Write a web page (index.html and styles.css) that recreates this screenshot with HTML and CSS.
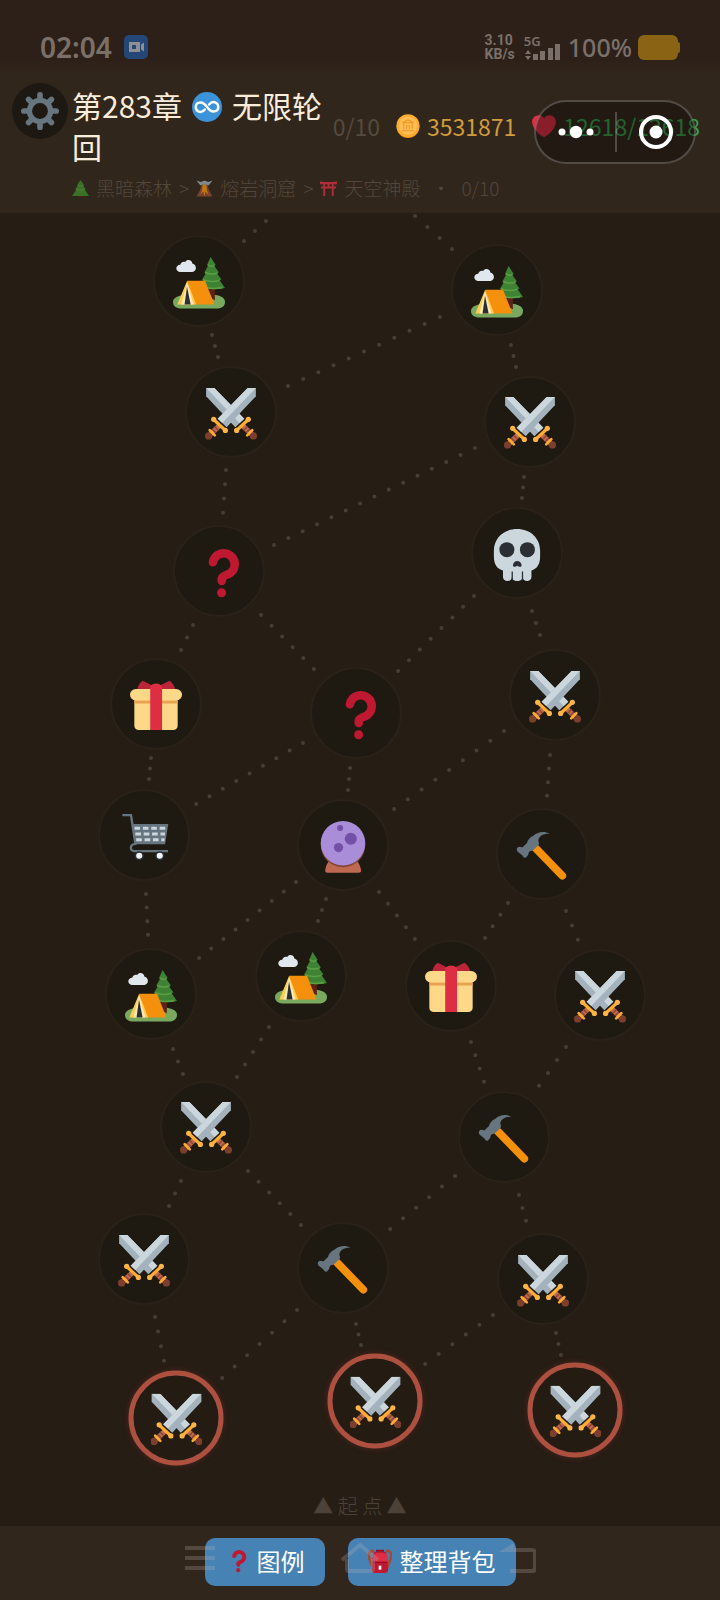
FILE: index.html
```html
<!DOCTYPE html>
<html lang="zh-CN">
<head>
    <meta charset="UTF-8">
    <meta name="viewport" content="width=device-width, initial-scale=1.0">
    <title>第283章 无限轮回</title>
    <link rel="stylesheet" href="styles.css">
</head>
<body>
    <!-- Icon set -->
    <svg class="icon-set" aria-hidden="true">
        <symbol id="sword" viewBox="0 0 36 36">
            <path fill="#a3b2bd" d="M29.5 0h5.7v5.700L15 27.200 8.800 21.300z"/>
            <path fill="#ccd6dd" d="M29.500 0h5.700L12 24.200 8.800 21.300z"/>
            <path stroke="#bf6952" stroke-width="3.600" d="M10 26L3.500 32.300"/>
            <path stroke="#8a4633" stroke-width="1" d="M6.600 26.600l2.600 2.600M5 28.400l2.600 2.600"/>
            <circle cx="2.500" cy="33.200" r="2.500" fill="#7c3f2d"/>
            <path stroke="#ffac33" stroke-width="1.800" stroke-linecap="round" d="M3.200 29.200l3.600 3.600"/>
            <path stroke="#ffac33" stroke-width="2.200" d="M6 21.800l8.200 7.600"/>
            <circle cx="6" cy="21.700" r="1.800" fill="#ffb545"/>
            <circle cx="14.100" cy="29.400" r="1.800" fill="#ffb545"/>
        </symbol>
        <symbol id="battle" viewBox="0 0 36 36">
            <g transform="translate(36 0) scale(-1 1)"><use href="#sword" width="36" height="36"/></g>
            <use href="#sword" width="36" height="36"/>
        </symbol>
        <symbol id="camp" viewBox="0 0 36 36">
            <path fill="#78a95f" d="M0 31c0-2.800 4-4.600 10-5h18c5 .6 8 2.400 8 5 0 3-2 4.700-6 4.700H6C2 35.700 0 34 0 31z"/>
            <path fill="#5c2314" d="M25 21h4v9l-4-2z"/>
            <path fill="#3e8233" d="M26 0l3.600 5.500-1.200.3 3.400 5-1.400.4 3.200 4.400-1.300.5L36 21.500c-6 1.500-12 .8-17.600-.500l2.700-4.900-1-.4 2.600-4.500-1-.4 2.700-5-.8-.3z"/>
            <path fill="none" stroke="#5a9f45" stroke-width="1.100" d="M24 5.500q2.200 1.600 4.800.4M22.200 10.700q4 2 8.600.3M20.600 15.800q6 2.200 11.500.3M19.500 20.800q7.500 1.700 14.500.4"/>
            <path fill="#e1e8ed" d="M4.800 10.300C1.400 10 1.500 5.600 5 5.400 5.500 3.300 7.400 3 8.500 3.500 9.700 1.300 13.200 1.800 13.400 4.500c3.400 1 3.200 5.500 0 5.800z"/>
            <path fill="#f4900c" d="M9.800 16.500h12.400l6.500 16.300H15z"/>
            <path fill="#ffcc4d" d="M9.800 16.500L3 32.800h13z"/>
            <path fill="#ffe8b6" d="M9.800 17.500L5.800 32.800h8.400z"/>
            <path fill="#292f33" d="M9.700 20.500L8 32.800h4.200z"/>
        </symbol>
        <symbol id="event" viewBox="0 0 36 36">
            <path fill="none" stroke="#be1931" stroke-width="5.900" stroke-linecap="round" d="M13.800 10.600a7.600 7.600 0 1 1 10.600 8.300q-4.500 1.500-4.500 3v1.700"/>
            <circle cx="19.800" cy="31.700" r="3.100" fill="#be1931"/>
        </symbol>
        <symbol id="elite" viewBox="0 0 36 36">
            <path fill="#ccd6dd" d="M18 0C27.500 0 34 6.500 34 15v4c0 6-2.500 8.500-6 9.800v4.400c0 3.700-6.100 3.700-6.100 0 0 3.700-7.400 3.700-7.400 0 0 3.700-6.200 3.700-6.200 0v-4.400C4.500 27.500 2 25 2 19v-4C2 6.500 8.500 0 18 0z"/>
            <path stroke="#292f33" stroke-width=".9" d="M14.700 29.500v6M21.800 29.500v6"/>
            <circle cx="11" cy="14.300" r="5.200" fill="#292f33"/>
            <circle cx="25.200" cy="14.300" r="5.200" fill="#292f33"/>
            <path fill="#292f33" d="M15.200 25.300c0-4.200 6-4.200 6 0 0 1-1.800 1.200-3 .1-1.200 1.100-3 .9-3-.1z"/>
        </symbol>
        <symbol id="treasure" viewBox="0 0 36 36">
            <path fill="#bc2439" d="M4.800 7C5.500 4 7 1.500 8.800.6L15 3.700h6L27.400.6C29.400 2 31 4.500 31.400 7z"/>
            <rect x="3" y="12" width="30" height="22.600" rx="3" fill="#fdd888"/>
            <path fill="#e8a24e" d="M3 14h30v2.200H3z"/>
            <rect y="6.200" width="36" height="8" rx="4" fill="#fdd888"/>
            <path fill="#dd2e44" d="M14 4.200q4-3.400 8.200 0v30.400H14z"/>
        </symbol>
        <symbol id="shop" viewBox="0 0 36 36">
            <path fill="none" stroke="#66757f" stroke-width="1.600" d="M3 2.800h6l3 20c-4 .3-4 4.900-.8 5h23.400"/>
            <path fill="#66757f" d="M10.300 9h24.500l-2.200 14H12z"/>
            <g stroke="#ccd6dd" stroke-width="2.100" stroke-dasharray="3.900 1.900">
                <path d="M11.400 11.900h21.500"/><path d="M12 15.900h20.500"/><path d="M12.600 19.900h19.600"/>
            </g>
            <circle cx="14.700" cy="31" r="3.200" fill="#292f33"/>
            <circle cx="28.900" cy="31" r="3.200" fill="#292f33"/>
            <circle cx="14.700" cy="31" r="2.100" fill="#f5f8fa"/>
            <circle cx="28.900" cy="31" r="2.100" fill="#f5f8fa"/>
        </symbol>
        <symbol id="oracle" viewBox="0 0 36 36">
            <path fill="#bf6952" d="M8.500 27h19c2 3 2.500 4.500 3 7 .2 1.200-.5 1.900-1.500 1.900H7.200c-1 0-1.700-.7-1.500-1.900.4-2.500 1-4 2.800-7z"/>
            <circle cx="18" cy="16.600" r="15.400" fill="#854836"/>
            <circle cx="18" cy="15.400" r="15.400" fill="#aa8dd8"/>
            <circle cx="16" cy="4.800" r="2.100" fill="#7450a8"/>
            <circle cx="23.400" cy="12.300" r="4.200" fill="#7450a8"/>
            <circle cx="14.900" cy="18.400" r="3.200" fill="#7450a8"/>
        </symbol>
        <symbol id="forge" viewBox="0 0 36 36">
            <path stroke="#f4900c" stroke-width="5.400" stroke-linecap="round" d="M14 13l18 18.600"/>
            <path fill="#66757f" d="M1.600 11.700q1.600-.4 2.700.5L7.600 9c.7-2.400 2-3.900 4.400-5 3.400-3 7.700-3.300 11.200-1.400-4.600-.2-7.300 1.700-7.800 4.700q1 2 0 3.300l-4 3.700q-3 .2-2.900 2.800l-1.700 2.100q-1.500.4-2.500-1.700L1 14.800q-1.200-2 .6-3.100z"/>
        </symbol>
        <symbol id="gear" viewBox="0 0 36 36">
            <g stroke="#66757f" stroke-width="5.400" stroke-linecap="round">
                <path d="M18 2.700v30.600"/><path d="M2.700 18h30.600"/><path d="M7.200 7.200l21.600 21.600"/><path d="M28.800 7.200L7.200 28.800"/>
            </g>
            <circle cx="18" cy="18" r="12.500" fill="#66757f"/>
            <circle cx="18" cy="18" r="7.500" fill="#1e1813"/>
        </symbol>
        <symbol id="infinity" viewBox="0 0 36 36">
            <circle cx="18" cy="18" r="18" fill="#3b94d9"/>
            <path fill="none" stroke="#fff" stroke-width="2.900" stroke-linecap="round" d="M15.500 21c-4.500 5.500-11 2.500-11-3s7.500-8.500 13.500 0 13.500 5.500 13.500 0-6.500-8.500-11-3"/>
        </symbol>
        <symbol id="coin" viewBox="0 0 36 36">
            <circle cx="18" cy="19" r="17" fill="#f4900c"/>
            <circle cx="18" cy="17.500" r="17.300" fill="#ffac33"/>
            <circle cx="18" cy="17.500" r="13.500" fill="#ffbf55"/>
            <path fill="none" stroke="#f39a2a" stroke-width="2" d="M9 25h18M11.500 22v-8M16 22v-6M20 22v-6M24.500 22v-8M9.500 13L18 9l8.500 4z"/>
        </symbol>
        <symbol id="heart" viewBox="0 0 36 36">
            <path fill="#dd2e44" d="M35.900 11.800c0-5.400-4.400-9.800-9.800-9.800C22.800 2 19.800 3.700 18 6.200 16.200 3.700 13.200 2 9.900 2 4.500 2 .1 6.400.1 11.800c0 .8.100 1.500.3 2.200C1.800 23.100 12 32.600 18 34.800c6-2.200 16.200-11.700 17.600-20.800.2-.7.300-1.400.3-2.200z"/>
        </symbol>
        <symbol id="forest" viewBox="0 0 36 36">
            <path fill="#662113" d="M14 30h8v6h-8z"/>
            <path fill="#3e8b2d" d="M18 0l7 10h-3l7 9h-3l10 15H0l10-15H7l7-9h-3z"/>
            <path fill="none" stroke="#5dab45" stroke-width="1.500" d="M11 11q7 3 14 0M8 20q10 4 20 0"/>
        </symbol>
        <symbol id="volcano" viewBox="0 0 36 36">
            <path fill="#99aab5" d="M1 1l9 3 8-3 8 3 9-3-8 10H9z"/>
            <path fill="#8f4c37" d="M12 10h12l4 12 7 13H1l7-13z"/>
            <path fill="#f4900c" d="M14 10h8l1 11 4 12-7-9-2 11-3-11-6 8 4-12z"/>
        </symbol>
        <symbol id="shrine" viewBox="0 0 36 36">
            <path fill="#dd2e44" d="M0 3q18 3 36 0v6H0zM2 14h32v4H2zM7 8h4v26H7zM25 8h4v26h-4zM16 9h4v6h-4z"/>
        </symbol>
        <symbol id="backpack" viewBox="0 0 36 36">
            <path fill="none" stroke="#a54a35" stroke-width="4" d="M9 3C1 2 0 10 3 17l5 13M27 3c8-1 9 7 6 14l-5 13"/>
            <path fill="#be1931" d="M9 4h18l2 9 1 19q0 4-3 4H9q-3 0-3-4l1-19z"/>
            <path fill="#dd2e44" d="M7 8q11-5 22 0v11H7z"/>
            <path fill="#a0041e" d="M12 1h12v3H12zM7 19h22v2H7z"/>
            <path fill="#fff" d="M16 25h4v6h-4z"/>
        </symbol>
    </svg>

    <div class="status-bar">
        <span class="clock">02:04</span>
        <svg class="video-icon" viewBox="0 0 24 24">
            <rect width="24" height="24" rx="5" fill="#244777"/>
            <path fill="#8d8f93" d="M5 7h11v10H5zM17 9.500L20 7.500v9l-3-2z"/>
            <rect x="8" y="10" width="4" height="4" fill="#244777"/>
        </svg>
        <span class="net-speed">3.10<br>KB/s</span>
        <span class="signal">
            <span>5G</span>
            <svg viewBox="0 0 38 17">
                <path d="M4 7l3 4H1zM4 17l3-4H1z"/>
                <path d="M9 11h5v6H9zM16 8h5v9h-5zM24 5h5v12h-5zM31 1h5v16h-5z"/>
            </svg>
        </span>
        <span class="battery-text">100%</span>
        <svg class="battery-icon" viewBox="0 0 42 25">
            <rect width="40" height="25" rx="6"/><rect x="36" y="7" width="6" height="11" rx="2"/>
        </svg>
    </div>

    <header class="header">
        <button class="settings-button" type="button" aria-label="设置"><svg><use href="#gear"/></svg></button>
        <div class="header-main">
            <div class="title-row">
                <h1>第283章<svg><use href="#infinity"/></svg>无限轮回</h1>
                <div class="stats">
                    <span class="progress">0/10</span>
                    <span class="gold"><svg><use href="#coin"/></svg>3531871</span>
                    <span class="health"><svg><use href="#heart"/></svg>12618/12618</span>
                </div>
            </div>
            <div class="route">
                <svg><use href="#forest"/></svg><span>黑暗森林</span>
                <span>&gt;</span>
                <svg><use href="#volcano"/></svg><span>熔岩洞窟</span>
                <span>&gt;</span>
                <svg><use href="#shrine"/></svg><span>天空神殿</span>
                <span class="route-dot">·</span>
                <span>0/10</span>
            </div>
        </div>
        <!-- Mini program capsule, floats over the stats -->
        <div class="capsule">
            <button type="button" aria-label="更多">
                <svg viewBox="0 0 36 14"><circle cx="4" cy="7" r="3.500"/><circle cx="18" cy="7" r="6.200"/><circle cx="32" cy="7" r="3.500"/></svg>
            </button>
            <button type="button" aria-label="关闭">
                <svg viewBox="0 0 34 34"><circle cx="17" cy="17" r="6.500"/><circle class="ring" cx="17" cy="17" r="15"/></svg>
            </button>
        </div>
    </header>

    <main class="map">
        <div class="map-canvas" id="map-canvas">
            <svg class="paths" id="paths" viewBox="0 0 720 1273"></svg>
        </div>
        <p class="start-label">▲ 起 点 ▲</p>
    </main>

    <footer class="footer">
        <button class="footer-button" type="button"><svg><use href="#event"/></svg>图例</button>
        <button class="footer-button" type="button"><svg><use href="#backpack"/></svg>整理背包</button>
        <svg class="nav-keys" viewBox="0 0 352 32" aria-hidden="true">
            <path d="M1 6h30M1 16h30M1 26h30"/>
            <path d="M158 18l18-15 18 15M163 17v10q0 2 2 2h22q2 0 2-2V17"/>
            <path d="M330 3l-8 5h26q3 0 3 3v15q0 3-3 3h-22"/>
        </svg>
    </footer>

    <script src="map.js"></script>
</body>
</html>
```
FILE: styles.css
```css
* {
    margin: 0;
    padding: 0;
    box-sizing: border-box;
}

body {
    min-height: 100vh;
    display: flex;
    flex-direction: column;
    background-color: #261d15;
    color: #f9ecda;
    font-family: "Noto Sans CJK SC", "Noto Sans", sans-serif;
}

button {
    border: none;
    font-family: inherit;
    cursor: pointer;
}

.icon-set {
    position: absolute;
    width: 0;
    height: 0;
}

/* Status bar */
.status-bar {
    height: 74px;
    padding: 20px 40px 0 40px;
    display: flex;
    align-items: center;
    background: linear-gradient(#2d2018 80%, #31261c);
    color: #7a7069;
    fill: #7a7069;
    font-family: "Noto Sans", sans-serif;
}

.clock {
    font-size: 28px;
    font-weight: 600;
}

.video-icon {
    width: 24px;
    height: 24px;
    margin-left: 12px;
}

.net-speed {
    margin-left: auto;
    font-family: Roboto, sans-serif;
    font-size: 14px;
    font-weight: 700;
    line-height: 14px;
}

.signal {
    width: 38px;
    margin: 0 6px 0 9px;
    font-size: 13px;
    font-weight: 600;
    line-height: 12px;
}

.signal span,
.signal svg {
    display: block;
}

.signal svg {
    margin-top: -4px;
}

.battery-text {
    font-size: 25px;
    font-weight: 500;
}

.battery-icon {
    width: 42px;
    height: 25px;
    margin-left: 6px;
    fill: #8a6414;
}

/* Header */
.header {
    position: relative;
    display: flex;
    align-items: flex-start;
    gap: 4px;
    padding: 9px 20px 11px 12px;
    background-color: #31261c;
}

.settings-button {
    flex: none;
    width: 56px;
    height: 56px;
    display: grid;
    place-items: center;
    border-radius: 50%;
    background-color: #1e1813;
}

.settings-button svg {
    width: 38px;
    height: 38px;
}

.header-main {
    flex: 1;
    padding-top: 2px;
}

.title-row {
    display: flex;
    align-items: center;
    gap: 6px;
}

.title-row h1 {
    flex: 1;
    font-size: 30px;
    font-weight: 400;
    line-height: 41px;
}

.title-row h1 svg {
    width: 30px;
    height: 30px;
    margin: 0 10px;
    vertical-align: -4px;
}

.stats {
    display: flex;
    gap: 16px;
    font-size: 23px;
    font-weight: 400;
    white-space: nowrap;
}

.stats span {
    display: flex;
    align-items: center;
    gap: 7px;
}

.stats svg {
    width: 24px;
    height: 24px;
}

.progress {
    color: #554a3f;
}

.gold {
    color: #d09c3c;
}

.health {
    color: #35a04c;
}

.route {
    display: flex;
    align-items: center;
    gap: 7px;
    margin-top: 7px;
    color: #53473a;
    font-size: 19px;
    font-weight: 300;
    line-height: 28px;
}

.route svg {
    width: 17px;
    height: 17px;
    opacity: 0.75;
}

.route-dot {
    margin: 0 4px;
}

.capsule {
    position: absolute;
    top: 26px;
    right: 24px;
    width: 162px;
    height: 64px;
    display: grid;
    grid-template-columns: 1fr 1fr;
    align-items: center;
    border: 2px solid rgba(255, 255, 255, 0.22);
    border-radius: 32px;
    background-color: rgba(10, 7, 4, 0.4);
}

.capsule button {
    height: 40px;
    display: grid;
    place-items: center;
    background: none;
}

.capsule button + button {
    border-left: 2px solid rgba(255, 255, 255, 0.22);
}

.capsule svg {
    width: 36px;
    height: 34px;
    fill: white;
}

.capsule .ring {
    fill: none;
    stroke: white;
    stroke-width: 4;
}

/* Map */
.map {
    flex: 1;
}

.map-canvas {
    position: relative;
}

.paths {
    display: block;
    width: 100%;
}

.paths line {
    stroke: #483e35;
    stroke-width: 4;
    stroke-linecap: round;
    stroke-dasharray: 0 1;
}

.node {
    position: absolute;
    width: 92px;
    height: 92px;
    padding-top: 3px;
    display: grid;
    place-items: center;
    transform: translate(-50%, -50%);
    border: 2px solid #2a2119;
    border-radius: 50%;
    background-color: #1f1a11;
}

.node svg {
    width: 52px;
    height: 52px;
}

.node-open {
    width: 95px;
    height: 95px;
    border: 5px solid #ad5040;
    background-color: #241c13;
    box-shadow: 0 0 6px rgba(173, 60, 40, 0.3);
}

.start-label {
    height: 40px;
    text-align: center;
    font-size: 20px;
    font-weight: 300;
    line-height: 40px;
    color: #4d4237;
}

/* Footer */
.footer {
    position: relative;
    display: flex;
    justify-content: center;
    gap: 23px;
    padding: 12px 0 14px;
    background-color: #31261c;
}

.footer-button {
    height: 48px;
    display: flex;
    align-items: center;
    gap: 8px;
    padding: 0 20px 3px;
    border-radius: 10px;
    background-color: #4682b4;
    color: white;
    font-size: 24px;
}

.footer-button svg {
    width: 24px;
    height: 24px;
}

.nav-keys {
    position: absolute;
    top: 16px;
    left: 50%;
    width: 352px;
    height: 32px;
    transform: translateX(-50%);
    fill: none;
    stroke: rgba(190, 180, 175, 0.25);
    stroke-width: 4;
    pointer-events: none;
}
```
FILE: map.js
```js
const MAP_WIDTH = 720;
const MAP_HEIGHT = 1273;

const labels = {
    camp: "营地",
    battle: "战斗",
    event: "事件",
    elite: "精英",
    treasure: "宝箱",
    shop: "商店",
    oracle: "占卜",
    forge: "锻造"
};

// type, x, y, open
const nodes = [
    ["camp", 199, 68], ["camp", 497, 77],
    ["battle", 231, 199], ["battle", 530, 209],
    ["event", 219, 358], ["elite", 517, 340],
    ["treasure", 156, 491], ["event", 356, 500], ["battle", 555, 482],
    ["shop", 144, 622], ["oracle", 343, 632], ["forge", 542, 641],
    ["camp", 151, 781], ["camp", 301, 763], ["treasure", 451, 773], ["battle", 600, 782],
    ["battle", 206, 914], ["forge", 504, 924],
    ["battle", 144, 1046], ["forge", 343, 1055], ["battle", 543, 1066],
    ["battle", 176, 1205, true], ["battle", 375, 1188, true], ["battle", 575, 1197, true]
];

// x1, y1, x2, y2, number of dots
const paths = [
    [244, 28, 277, -2, 4], [452, 36, 415, 3, 4],
    [212, 122, 218, 144, 3], [511, 132, 516, 154, 3], [288, 173, 440, 104, 11],
    [226, 257, 223, 300, 4], [274, 332, 475, 235, 15], [524, 264, 522, 285, 3],
    [193, 412, 181, 437, 3], [261, 402, 314, 456, 6], [474, 383, 398, 458, 8], [532, 398, 540, 422, 3],
    [151, 545, 149, 566, 3], [303, 530, 196, 591, 9], [350, 555, 348, 577, 3],
    [504, 518, 394, 596, 9], [550, 542, 547, 583, 4],
    [146, 681, 148, 722, 4], [296, 669, 199, 745, 9], [326, 686, 318, 708, 3],
    [379, 679, 415, 726, 5], [508, 690, 485, 725, 4], [566, 698, 578, 727, 3],
    [173, 836, 183, 861, 3], [269, 814, 237, 864, 5], [471, 829, 484, 869, 4], [566, 834, 539, 873, 4],
    [181, 968, 169, 993, 3], [248, 958, 301, 1012, 6], [455, 963, 390, 1016, 6], [519, 982, 526, 1008, 3],
    [155, 1104, 164, 1148, 4], [297, 1097, 222, 1165, 7], [356, 1111, 361, 1132, 3],
    [493, 1102, 425, 1151, 6], [556, 1120, 561, 1142, 3]
];

const canvas = document.getElementById("map-canvas");
const svg = document.getElementById("paths");

svg.innerHTML = paths.map(([x1, y1, x2, y2, dots]) =>
    `<line x1="${x1}" y1="${y1}" x2="${x2}" y2="${y2}" pathLength="${dots - 0.99}"></line>`
).join("");

nodes.forEach(([type, x, y, open]) => {
    const button = document.createElement("button");
    button.type = "button";
    button.className = open ? "node node-open" : "node";
    button.style.left = (x / MAP_WIDTH) * 100 + "%";
    button.style.top = (y / MAP_HEIGHT) * 100 + "%";
    button.setAttribute("aria-label", labels[type]);
    button.innerHTML = `<svg><use href="#${type}"></use></svg>`;
    canvas.appendChild(button);
});
```
